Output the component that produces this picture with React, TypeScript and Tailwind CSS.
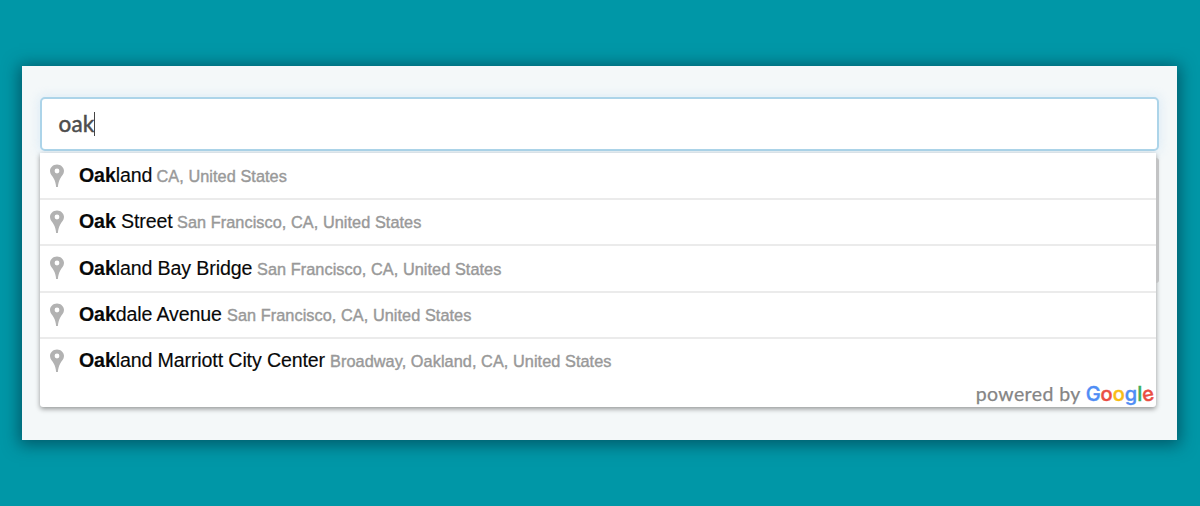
type Place = { match: string; rest: string; detail: string; width: string };

const places: Place[] = [
  { match: "Oak", rest: "land", detail: "CA, United States", width: "w-[72.5px]" },
  { match: "Oak", rest: " Street", detail: "San Francisco, CA, United States", width: "w-[93px]" },
  { match: "Oak", rest: "land Bay Bridge", detail: "San Francisco, CA, United States", width: "w-[173px]" },
  { match: "Oak", rest: "dale Avenue", detail: "San Francisco, CA, United States", width: "w-[143px]" },
  { match: "Oak", rest: "land Marriott City Center", detail: "Broadway, Oakland, CA, United States", width: "w-[246px]" },
];

function Pin() {
  return (
    <svg className="mt-[10px] h-[24px] w-[14px] shrink-0" viewBox="0 0 14 24" aria-hidden="true">
      <path
        fill="#b2b2b2"
        fillRule="evenodd"
        d="M7 0.5C3.1 0.5 0 3.4 0 7.1c0 3.2 2.400 4.900 4 7.900C5.200 17.300 5.900 20 6.100 23h1.800C8.100 20 8.800 17.300 10 15 11.600 12 14 10.300 14 7.100 14 3.400 10.900 0.500 7 0.500ZM7 4.600a2.400 2.400 0 1 1 0 4.800 2.400 2.400 0 0 1 0-4.800Z"
      />
    </svg>
  );
}

function Row({ place }: { place: Place }) {
  return (
    <li className="flex h-[46.2px] border-t-2 border-[#ebebeb] pl-[10px] first:border-transparent">
      <Pin />
      <div className="ml-[15px] flex items-baseline whitespace-nowrap pt-[6.300px] leading-[30px]">
        <span className={`${place.width} shrink-0 whitespace-pre text-[19.6px] tracking-[-0.12px] text-[#080808] [-webkit-text-stroke:0.15px_#080808]`}>
          <b className="font-bold">{place.match}</b>
          {place.rest}
        </span>
        <span className="ml-[5px] text-[16.3px] tracking-[0.06px] text-[#999] [-webkit-text-stroke:0.4px_#999]">
          {place.detail}
        </span>
      </div>
    </li>
  );
}

export default function App() {
  return (
    <main className="h-[506px] w-[1200px] overflow-hidden bg-[#0097a7] pl-[22px] pt-[66px] font-['Liberation_Sans',Arial,sans-serif]">
      <section className="h-[374px] w-[1155px] bg-[#f4f8f9] pl-[18px] pt-[31px] shadow-[0_2px_15px_3px_rgba(0,50,65,0.6)]">
        <div className="flex h-[54px] w-[1119px] items-center rounded-[5px] border-2 border-[#acd4e9] bg-white pl-[16.500px] shadow-[0_0_10px_2px_rgba(200,224,245,0.45)]">
          <span className="text-[22.5px] leading-[28px] tracking-[0.15px] text-[#4d4d4d] [-webkit-text-stroke:0.5px_#4d4d4d] font-['Lato',sans-serif]">oak</span>
          <span className="h-[24px] w-px bg-[#444]" />
        </div>
        <div className="flex w-[1119px] pt-[2px]">
          <div className="h-[254px] w-[1116px] rounded-b-[3px] bg-white shadow-[0_2px_5px_rgba(0,0,0,0.4)]">
            <ul className="-mt-px h-[231px]">
              {places.map((place) => (
                <Row key={place.rest} place={place} />
              ))}
            </ul>
            <div className="-mt-[2px] flex items-baseline justify-end whitespace-pre pr-[2px] leading-[26px]">
              <span className="mr-[5px] text-[19.500px] tracking-[0.4px] text-[#858585] [-webkit-text-stroke:0.25px_#858585] font-['Lato',sans-serif]">powered by</span>
              <span className="text-[20px] font-medium [-webkit-text-stroke:0.4px_currentColor] font-['Inter',sans-serif]">
                <span className="text-[#4f8df5] [-webkit-text-stroke:0.4px_#4f8df5]">G</span>
                <span className="text-[#ea4e43] [-webkit-text-stroke:0.4px_#ea4e43]">o</span>
                <span className="text-[#f9bc15] [-webkit-text-stroke:0.4px_#f9bc15]">o</span>
                <span className="text-[#4f8df5] [-webkit-text-stroke:0.4px_#4f8df5]">g</span>
                <span className="text-[#3eae5b] [-webkit-text-stroke:0.4px_#3eae5b]">l</span>
                <span className="inline-block origin-center -rotate-12 leading-none text-[#ea4e43] [-webkit-text-stroke:0.4px_#ea4e43]">e</span>
              </span>
            </div>
          </div>
          <div className="mt-[5px] h-[125px] w-[3px] rounded-r-[3px] bg-[#c2c3c4]" />
        </div>
      </section>
    </main>
  );
}
